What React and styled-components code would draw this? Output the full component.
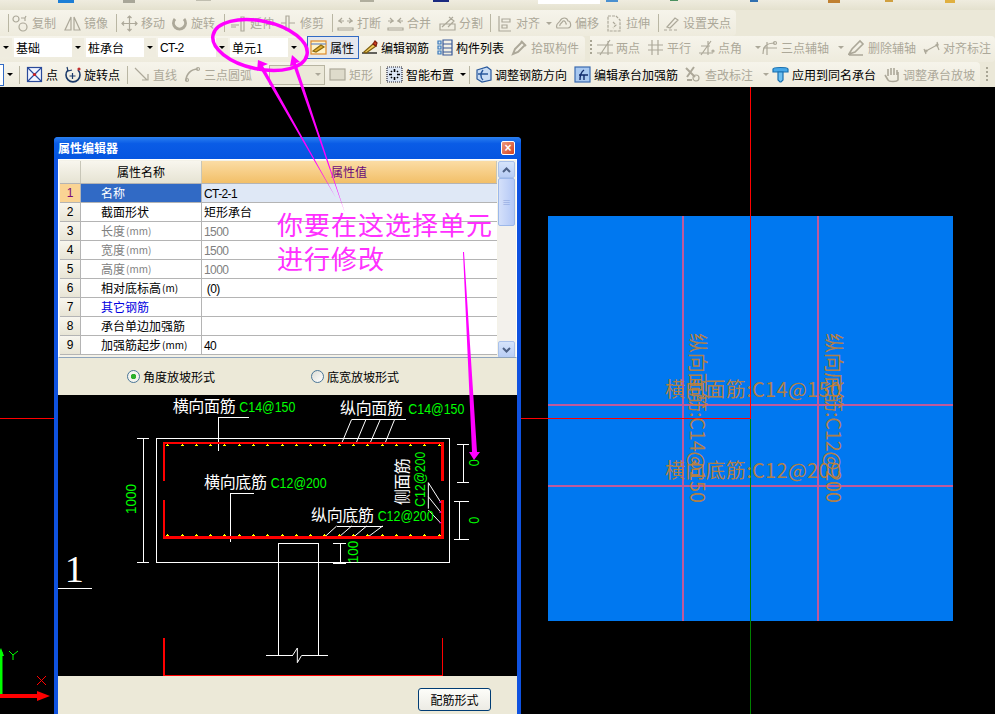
import React from 'react';
import styled, { createGlobalStyle } from 'styled-components';

const CJK = '"Noto Sans CJK SC", "Liberation Sans", sans-serif';
const LATIN = '"Liberation Sans", "Noto Sans CJK SC", sans-serif';
const GREY = '#aca899';

const GlobalStyle = createGlobalStyle`
  html, body {
    margin: 0;
    height: 100%;
    background: #000;
    overflow: hidden;
  }
  #root {
    height: 100%;
  }
`;

const Page = styled.div`
  position: relative;
  width: 995px;
  height: 714px;
  display: flex;
  flex-direction: column;
  font-family: ${CJK};
  font-size: 12px;
  line-height: 14px;
  background: #000;
  overflow: hidden;
`;

const TopStrip = styled.svg`
  display: block;
  flex: none;
  width: 995px;
  height: 10px;
  background: linear-gradient(#efecdf, #e4e1ce);
`;

const ToolRow = styled.div`
  flex: none;
  height: ${(p) => p.$h}px;
  display: flex;
  align-items: center;
  background: #ebe8d8;
`;

const Band = styled.div`
  display: flex;
  align-items: center;
  height: 100%;
  width: ${(p) => p.$w}px;
  flex: none;
  padding-left: ${(p) => p.$pad || 0}px;
  padding-bottom: ${(p) => p.$pb || 0}px;
  box-sizing: border-box;
  background: linear-gradient(#f6f4eb, #eeebdd);
  border-radius: 0 4px 4px 0;
  margin-right: ${(p) => p.$mr || 0}px;
`;

const Tool = styled.div`
  flex: none;
  width: ${(p) => p.$w}px;
  margin-left: ${(p) => p.$ml || 0}px;
  display: flex;
  align-items: center;
  gap: 3px;
  height: 22px;
  white-space: nowrap;
  color: ${(p) => (p.$off ? GREY : '#000')};
`;

const ActiveTool = styled(Tool)`
  box-sizing: border-box;
  height: 23px;
  padding-left: 2px;
  border: 1px solid #316ac5;
  background: #e4e7ee;
`;

const IconBox = styled.svg`
  flex: none;
  width: 17px;
  height: 17px;
  fill: none;
  stroke: currentColor;
  stroke-width: 1.2;
`;

const Caret = styled.span`
  flex: none;
  margin-left: ${(p) => p.$ml ?? 3}px;
  width: 0;
  height: 0;
  border-left: 3px solid transparent;
  border-right: 3px solid transparent;
  border-top: 3px solid ${(p) => (p.$off ? GREY : '#000')};
`;

const Divider = styled.div`
  flex: none;
  width: ${(p) => p.$w}px;
  height: 18px;
  box-sizing: border-box;
  border-left: 1px solid #b9b6a3;
`;

const Grip = styled.div`
  flex: none;
  width: ${(p) => p.$w}px;
  height: 16px;
  box-sizing: border-box;
  margin-left: ${(p) => p.$ml || 0}px;
  background: repeating-linear-gradient(#a8a594 0 2px, transparent 2px 4px) left / 2px 100% no-repeat;
`;

const Combo = styled.div`
  flex: none;
  width: 70px;
  height: 19px;
  margin-right: 2px;
  display: flex;
  background: #fff;
  box-sizing: border-box;
  padding-left: 2px;
  align-items: center;
  font-family: ${(p) => (p.$latin ? LATIN : CJK)};
  letter-spacing: ${(p) => (p.$latin ? '-0.6px' : '0')};
`;

const ComboText = styled.span`
  flex: 1;
`;

const ComboArrow = styled.span`
  flex: none;
  width: 12px;
  height: 19px;
  background: #efecdf;
  display: flex;
  align-items: center;
  justify-content: center;
`;

const ComboStub = styled.div`
  flex: none;
  width: ${(p) => p.$w}px;
  height: 19px;
  margin-right: ${(p) => p.$mr ?? 2}px;
  background: ${(p) => (p.$bare ? 'transparent' : '#efecdf')};
  display: flex;
  align-items: center;
  justify-content: center;
`;

const BlueEnd = styled.div`
  flex: none;
  width: 4px;
  height: 22px;
  box-sizing: border-box;
  background: #fff;
  border: 1px solid #316ac5;
  border-left: none;
  margin-right: 2px;
`;

const DeadCombo = styled.div`
  flex: none;
  width: 56px;
  height: 20px;
  box-sizing: border-box;
  border: 1px solid #b8b5a2;
  background: #ebe8d8;
  display: flex;
  align-items: center;
  justify-content: flex-end;
  padding-right: 3px;
  margin-right: 4px;
`;

const Canvas = styled.div`
  position: relative;
  flex: 1;
  background: #000;
`;

const Scene = styled.svg`
  position: absolute;
  inset: 0;
  width: 995px;
  height: 627px;
`;

const Dialog = styled.div`
  position: absolute;
  left: 54px;
  top: 50px;
  width: 467px;
  height: 590px;
  box-sizing: border-box;
  display: flex;
  flex-direction: column;
  background: #0f52e0;
  border-radius: 4px 4px 0 0;
  padding: 0 4px;
`;

const TitleBar = styled.div`
  flex: none;
  height: 22px;
  margin: 0 -4px;
  padding: 0 6px 0 4px;
  display: flex;
  align-items: center;
  justify-content: space-between;
  background: linear-gradient(#2a80f0, #0a5ce6 30%, #0555e0);
  border-radius: 4px 4px 0 0;
`;

const TitleText = styled.span`
  color: #fff;
  font-weight: 700;
  font-size: 12px;
`;

const CloseBox = styled.div`
  width: 12px;
  height: 12px;
  border: 1px solid #fff;
  border-radius: 2px;
  background: linear-gradient(135deg, #ec9a80, #d4401c);
  color: #fff;
  font: bold 12px/12px "Liberation Sans", sans-serif;
  text-align: center;
`;

const Grid = styled.div`
  flex: none;
  height: 199px;
  box-sizing: border-box;
  padding: 1px 2px 0 1px;
  display: flex;
  background: #f4f2e8;
  border: 1px solid #fff;
  border-bottom: 1px solid #8ea4bc;
  overflow: hidden;
`;

const Cells = styled.div`
  flex: none;
  width: 437px;
`;

const Row = styled.div`
  display: flex;
  height: ${(p) => (p.$head ? 23 : 19)}px;
  box-sizing: border-box;
  border-bottom: 1px solid #b4b4b4;
  background: #fff;
`;

const NumCell = styled.div`
  flex: none;
  width: 21px;
  box-sizing: border-box;
  border-right: 1px solid #b4b4b4;
  display: flex;
  align-items: center;
  justify-content: center;
  font-family: ${LATIN};
  color: ${(p) => (p.$on ? '#7a0a7a' : '#000')};
  background: ${(p) => (p.$on ? '#fad494' : 'linear-gradient(#f8f6ee, #e8e5d6)')};
`;

const NameCell = styled.div`
  flex: none;
  width: 121px;
  box-sizing: border-box;
  padding-left: 20px;
  border-right: 1px solid #b4b4b4;
  display: flex;
  align-items: center;
  white-space: pre;
  color: ${(p) => (p.$on ? '#fff' : p.$tone || '#000')};
  background: ${(p) => (p.$on ? '#316ac5' : '#fff')};
`;

const Unit = styled.span`
  font-size: 10px;
  padding-left: 1px;
`;

const ValueCell = styled.div`
  flex: 1;
  box-sizing: border-box;
  padding-left: 2px;
  padding-top: ${(p) => (p.$latin ? 1 : 0)}px;
  display: flex;
  align-items: center;
  font-family: ${(p) => (p.$latin ? LATIN : CJK)};
  letter-spacing: ${(p) => (p.$latin ? '-0.6px' : '0')};
  color: ${(p) => p.$tone || '#000'};
  background: ${(p) => (p.$on ? '#dfe8f6' : '#fff')};
`;

const HeadCell = styled.div`
  flex: ${(p) => (p.$w ? 'none' : 1)};
  width: ${(p) => p.$w || 0}px;
  box-sizing: border-box;
  border-right: 1px solid #c8c6b8;
  display: flex;
  align-items: center;
  justify-content: center;
  background: ${(p) => (p.$hot ? 'linear-gradient(#fbdca4, #f2bf68)' : 'linear-gradient(#f8f6ee, #e6e3d3)')};
  color: ${(p) => (p.$hot ? '#6a0a7a' : '#000')};
`;

const ScrollTrack = styled.div`
  flex: none;
  width: 17px;
  margin-left: 1px;
  height: 197px;
  display: flex;
  flex-direction: column;
  align-items: stretch;
  background: #f3f1ec;
`;

const ScrollBtn = styled.div`
  flex: none;
  height: 17px;
  box-sizing: border-box;
  border: 1px solid #a9c1ea;
  border-radius: 2px;
  background: linear-gradient(#d6e4fb, #b8cdf4);
  display: flex;
  align-items: center;
  justify-content: center;
`;

const Chevron = styled.svg`
  width: 9px;
  height: 6px;
  fill: none;
  stroke: #4d6185;
  stroke-width: 2;
`;

const ScrollThumb = styled.div`
  flex: none;
  height: 48px;
  box-sizing: border-box;
  border: 1px solid #9cb8ea;
  border-radius: 2px;
  background: linear-gradient(90deg, #d4e0fa, #b4c8f6);
  display: flex;
  align-items: center;
  justify-content: center;
  color: #8aa4dc;
  font-size: 9px;
  line-height: 3px;
`;

const ScrollGap = styled.div`
  flex: 1;
`;

const RadioBar = styled.div`
  flex: none;
  height: 37px;
  display: flex;
  align-items: center;
  background: #ece9d8;
  padding-left: 69px;
  gap: 96px;
`;

const RadioItem = styled.label`
  display: flex;
  align-items: center;
  gap: 3px;
`;

const RadioDot = styled.span`
  width: 11px;
  height: 11px;
  border: 1px solid #4a7698;
  border-radius: 50%;
  background: ${(p) => (p.$on ? 'radial-gradient(#2cb02c 0 2.5px, #f4f4ee 3px)' : 'linear-gradient(135deg, #dcdcd4, #fff)')};
`;

const DrawingPane = styled.svg`
  display: block;
  flex: none;
  width: 459px;
  height: 281px;
  background: #000;
  overflow: visible;
`;

const Footer = styled.div`
  flex: 1;
  display: flex;
  justify-content: flex-end;
  align-items: flex-start;
  padding: 12px 26px 0 0;
  background: #ece9d8;
`;

const PushButton = styled.div`
  width: 73px;
  height: 23px;
  box-sizing: border-box;
  border: 1px solid #003c74;
  border-radius: 3px;
  background: linear-gradient(#fdfdf9, #ecebe4);
  display: flex;
  align-items: center;
  justify-content: center;
`;

const Markup = styled.svg`
  position: absolute;
  left: 0;
  top: 0;
  width: 995px;
  height: 714px;
  pointer-events: none;
`;

const g = {
  copy: <><circle cx="4" cy="4" r="3" /><circle cx="11" cy="12" r="4" /><path d="M9 3l4 0 1-2M13 3v3" /></>,
  mirror: <><path d="M7 2L1 15h6zM10 2l6 13h-6z" /></>,
  move: <><path d="M8.5 1v15M1 8.5h15M6.5 3l2-2 2 2M6.5 14l2 2 2-2M3 6.5l-2 2 2 2M14 6.5l2 2-2 2" /></>,
  rotate: <><path d="M4 4a6 6 0 1 0 9 0" strokeWidth="3" /></>,
  extend: <><path d="M1 10h8M1 12h5M11 2h3v14h-3z" /></>,
  trim: <><path d="M6 1h3v14H6zM9 8h6M1 8h5" /></>,
  cut: <><path d="M1 6h6M10 6h6M1 13h15v2H1zM5 3L2 6l3 2M12 3l3 3-3 2" /></>,
  merge: <><path d="M1 6h6M10 6h6M1 13h15v2H1zM3 3l3 3-3 2M14 3l-3 3 3 2" /></>,
  split: <><path d="M1 9h15v6H1zM3 12L14 2M10 2l5 4-6 6" /></>,
  align: <><path d="M3 1v15h12M6 4h8v3H6zM6 10h5v3H6z" /></>,
  offset: <><path d="M2 13c-2-4 2-5 3-7 2-4 7-4 8 0 3 0 4 7 0 7zM5 11c-1-2 2-3 3-5 2-1 3 2 3 3h1" /></>,
  stretch: <><path d="M2 1h8l4 4v11H2zM7 7l3 3-3 3" strokeDasharray="3 1" /></>,
  anchor: <><path d="M1 15h3M6 15h3M11 15h3M4 12L12 3l3 2-8 8z" /></>,
  picker: <><path d="M2 15l2-5 7-7 3 3-7 7zM10 2l5 5" strokeWidth="2" /></>,
  two: <><path d="M1 14h16M1 6h16M4 16L14 1M12 2v14" /></>,
  para: <><path d="M1 6h15M1 11h15M5 1v15M11 1v15" /></>,
  angle: <><path d="M1 14h14M3 7h9M3 16L13 2M10 2v14" /><circle cx="15" cy="12" r="1" /></>,
  arc3: <><path d="M2 15c0-8 4-11 12-11M6 16V3M2 9h14" /><circle cx="14" cy="4" r="1.5" /></>,
  drop: <><path d="M1 15l3-5 8-8 3 3-8 8zM1 16h14" strokeWidth="1.6" /></>,
  dim: <><path d="M1 10l2 5M3 12l11-6 2 5M14 3l1 3" /><circle cx="3" cy="12" r="1" /><circle cx="14" cy="6" r="1" /></>,
  line: <><path d="M2 2l12 12M9 14h6V8" /></>,
  arc: <><path d="M2 15c0-7 5-12 12-12" strokeWidth="1.6" /><circle cx="3" cy="14" r="1.5" /><circle cx="14" cy="3" r="1.5" /></>,
  box: <><rect x="1" y="3" width="15" height="11" fill="#dedbcb" /></>,
  query: <><path d="M1 2l9 9M9 1L2 11M2 14h5" strokeWidth="2" /><circle cx="11" cy="12" r="3" /></>,
  hand: <><path d="M2 9l3 5c1 2 9 2 10 0V6M5 10V3M8 9V2M11 9V2M14 9V4" strokeWidth="1.6" /></>,
  prop: (
    <>
      <rect x="1" y="2" width="15" height="13" fill="#fff2c8" stroke="#e08a28" />
      <path d="M1 5h15" stroke="#6a88c8" />
      <path d="M3 12l8-6 3 2-8 5z" fill="#e8b030" stroke="#8a6a10" />
    </>
  ),
  rebar: (
    <>
      <path d="M1 14h15" stroke="#000" />
      <path d="M3 13l9-8 3 2-10 7z" fill="#f4d060" stroke="#806010" />
      <path d="M12 5l2-3 2 2-1 3z" fill="#d04020" stroke="#802010" />
    </>
  ),
  list: (
    <>
      <path d="M7 1h9v15H7zM7 5h9M7 9h9M7 13h9" stroke="#3a5a98" />
      <path d="M2 2h3v3H2zM2 7h3v3H2zM2 12h3v3H2z" stroke="#3a78b8" fill="#d8e8f8" />
    </>
  ),
  point: (
    <>
      <rect x="1.5" y="1.5" width="14" height="14" stroke="#2a4a9a" fill="#f0f4ff" />
      <path d="M2 2l13 13M15 2L2 15" stroke="#2a4a9a" />
      <circle cx="8.5" cy="8.5" r="1.6" fill="#d02020" stroke="none" />
    </>
  ),
  spin: (
    <>
      <path d="M4 4a7 7 0 1 0 10 0" stroke="#1a3a6a" strokeWidth="1.6" />
      <path d="M3 1l1 4 4-1" stroke="#1a3a6a" />
      <path d="M8.5 7v6M5.5 10h6" stroke="#1a3a6a" />
      <circle cx="15" cy="3" r="1.6" fill="#c03030" stroke="none" />
    </>
  ),
  smart: (
    <>
      <rect x="1" y="1" width="15" height="15" fill="#dce6f4" stroke="#223" strokeDasharray="1 1" />
      <path d="M8.5 3v3M8.5 11v3M3 8.5h3M11 8.5h3M5 5l1 1M12 5l-1 1M5 12l1-1M12 12l-1-1" stroke="#000" strokeWidth="1.6" />
    </>
  ),
  tune: (
    <>
      <path d="M2 4l10-3 4 3v10l-9 2-5-3z" fill="#c8dcf4" stroke="#28589c" />
      <path d="M3 8h10M8 4c-3 4-3 7 0 10" stroke="#28589c" strokeWidth="1.4" />
    </>
  ),
  haunch: (
    <>
      <rect x="1" y="1" width="15" height="15" fill="#a8c8f0" stroke="#3a6ab0" />
      <path d="M5 9h9M10 4c-3 2-4 5-4 10M10 9v5" stroke="#102a6a" strokeWidth="1.4" />
    </>
  ),
  apply: (
    <>
      <path d="M1 3c0-2 15-2 15 0v3H1z" fill="#48a8e8" stroke="#1a70b0" />
      <path d="M6 6h5v8l-2 2h-1l-2-2z" fill="#70c0f0" stroke="#1a70b0" />
    </>
  ),
};

const Icon = ({ name }) => (
  <IconBox viewBox="0 0 17 17">
    {g[name]}
  </IconBox>
);

const T = ({ icon, label, w, off, caret, ml, left }) => (
  <Tool $w={w} $off={off} $ml={left}>
    <Icon name={icon} />
    {label}
    {caret && <Caret $off={off} $ml={ml} />}
  </Tool>
);

const propRows = [
  { name: '名称', value: 'CT-2-1', latin: true, on: true },
  { name: '截面形状', value: '矩形承台' },
  { name: '长度', unit: '(mm)', value: '1500', latin: true, tone: '#808080' },
  { name: '宽度', unit: '(mm)', value: '1500', latin: true, tone: '#808080' },
  { name: '高度', unit: '(mm)', value: '1000', latin: true, tone: '#808080' },
  { name: '相对底标高', unit: '(m)', value: '\u00a0(0)', latin: true },
  { name: '其它钢筋', value: '', nameTone: '#0000e0' },
  { name: '承台单边加强筋', value: '' },
  { name: '加强筋起步', unit: '(mm)', value: '40', latin: true },
];

const dotXs = [352, 397, 439, 481, 523, 568, 610, 652, 697, 739, 781, 823, 869, 911, 953, 998, 1039, 1081, 1123, 1168];
const plus = (x, y) => `M${x - 4} ${y}h8M${x} ${y - 4}v8`;

const Code = ({ children, len, ...rest }) => (
  <text fontSize="45" fill="#0f0" fontFamily={LATIN} textLength={len} lengthAdjust="spacingAndGlyphs" {...rest}>
    {children}
  </text>
);

const Label = ({ x, y, cn, code, codeX }) => (
  <>
    <text x={x} y={y} fontSize="48" fill="#fff" fontFamily={CJK} textLength="189">{cn}</text>
    <Code x={codeX} y={y} len="168">{code}</Code>
  </>
);

const Drawing = () => (
  <DrawingPane viewBox="24 15 1377 843">
    <g fill="none" stroke="#fff" strokeWidth="3" shapeRendering="crispEdges">
      <rect x="319" y="145" width="880" height="372" />
      <path d="M505 82h92M505 82v100M541 310h71M541 310v145M905 88h163M860 408h138" />
      <path d="M262 145h36M262 517h36M279 145v372" />
      <path d="M1222 162h36M1222 278h36M1240 162v116M1212 334h46M1212 449h46M1229 334v115" />
      <path d="M850 460h38M850 520h38M870 460v60" />
      <path d="M685 460h120M685 460v336M805 460v336M648 796h80M755 796h78M24 595h102" />
    </g>
    <g fill="none" stroke="#fff" strokeWidth="3">
      <path d="M728 796l14-22v44l13-22" />
      <path d="M905 88l-30 72M948 88l-30 72M991 88l-31 72M1034 88l-29 72" />
      <path d="M860 408l-35 32M905 408l-37 32M950 408l-38 32M998 408l-43 32" />
      <path d="M1135 278v78M1135 278l36 57M1135 320l36 45M1135 360l36 38" />
    </g>
    <path d="M342 272V158H1177V272M342 330V442H1177V330" fill="none" stroke="#f00" strokeWidth="7" shapeRendering="crispEdges" />
    <path d="M342 745V856H1177V745" fill="none" stroke="#f00" strokeWidth="5" shapeRendering="crispEdges" />
    <path
      d={dotXs.map((x) => plus(x, 165) + plus(x, 435)).join('')}
      stroke="#ff0"
      strokeWidth="3"
      shapeRendering="crispEdges"
    />
    <path d="M1171 335v3M1171 365v3M1171 397v3" stroke="#f0f" strokeWidth="6" />
    <Label x={368} y={66} cn="横向面筋" code="C14@150" codeX={568} />
    <Label x={870} y={72} cn="纵向面筋" code="C14@150" codeX={1075} />
    <Label x={462} y={294} cn="横向底筋" code="C12@200" codeX={662} />
    <Label x={783} y={394} cn="纵向底筋" code="C12@200" codeX={983} />
    <text transform="translate(1074 345) rotate(-90)" fontSize="48" fill="#fff" fontFamily={CJK} textLength="140">侧面筋</text>
    <Code transform="translate(1125 350) rotate(-90)" len="165">C12@200</Code>
    <Code transform="translate(258 372) rotate(-90)" len="90">1000</Code>
    <Code transform="translate(925 520) rotate(-90)" len="68">100</Code>
    <Code transform="translate(1287 229) rotate(-90)" len="21">0</Code>
    <Code transform="translate(1287 401) rotate(-90)" len="21">0</Code>
    <text x="44" y="577" fontSize="115" fill="#fff" fontFamily='"Liberation Serif", serif'>1</text>
  </DrawingPane>
);

const App = () => (
  <Page>
    <GlobalStyle />
    <TopStrip viewBox="0 0 995 10">
      <rect x="58" y="0" width="16" height="3" fill="#1c7ed6" />
      <rect x="123" y="0" width="12" height="3" fill="#a8a698" />
      <rect x="196" y="0" width="15" height="1" fill="#c0beb0" />
      <rect x="360" y="0" width="14" height="2" fill="#b0ae9e" />
      <rect x="433" y="0" width="16" height="2" fill="#1a2a80" />
      <rect x="538" y="0" width="62" height="4" fill="#fff" />
      <rect x="606" y="0" width="12" height="2" fill="#4a90d0" />
      <rect x="670" y="0" width="8" height="1" fill="#4a9060" />
      <rect x="750" y="0" width="8" height="2" fill="#3070b0" />
      <rect x="828" y="0" width="12" height="3" fill="#c08030" />
      <rect x="885" y="0" width="8" height="2" fill="#d0a040" />
      <rect x="945" y="0" width="10" height="3" fill="#e0b040" />
    </TopStrip>

    <ToolRow $h={26}>
      <Band $w={736} $pad={8}>
        <Divider $w={4} />
        <T icon="copy" label="复制" w={52} off />
        <T icon="mirror" label="镜像" w={52} off />
        <Divider $w={5} />
        <T icon="move" label="移动" w={50} off />
        <T icon="rotate" label="旋转" w={53} off />
        <Divider $w={6} />
        <T icon="extend" label="延伸" w={50} off />
        <T icon="trim" label="修剪" w={52} off />
        <Divider $w={5} />
        <T icon="cut" label="打断" w={50} off />
        <T icon="merge" label="合并" w={52} off />
        <T icon="split" label="分割" w={51} off />
        <Divider $w={6} />
        <T icon="align" label="对齐" caret w={59} off />
        <T icon="offset" label="偏移" w={51} off />
        <T icon="stretch" label="拉伸" w={52} off />
        <Divider $w={5} />
        <T icon="anchor" label="设置夹点" w={70} off />
      </Band>
    </ToolRow>

    <ToolRow $h={26}>
      <Band $w={585} $mr={5} $pb={3}>
        <ComboStub $w={12}><Caret $ml={0} /></ComboStub>
        <Combo><ComboText>基础</ComboText><ComboArrow><Caret $ml={0} /></ComboArrow></Combo>
        <Combo><ComboText>桩承台</ComboText><ComboArrow><Caret $ml={0} /></ComboArrow></Combo>
        <Combo $latin><ComboText>CT-2</ComboText><ComboArrow><Caret $ml={0} /></ComboArrow></Combo>
        <Combo><ComboText>单元1</ComboText><ComboArrow><Caret $ml={0} /></ComboArrow></Combo>
        <ActiveTool $w={52} $ml={5}>
          <Icon name="prop" />
          属性
        </ActiveTool>
        <T icon="rebar" label="编辑钢筋" w={75} left={2} />
        <T icon="list" label="构件列表" w={75} />
        <T icon="picker" label="拾取构件" w={70} off />
      </Band>
      <Band $w={405} $pb={3}>
        <Grip $w={6} />
        <T icon="two" label="两点" w={51} off />
        <T icon="para" label="平行" w={51} off />
        <T icon="angle" label="点角" caret ml={10} w={63} off />
        <T icon="arc3" label="三点辅轴" caret ml={6} w={87} off />
        <T icon="drop" label="删除辅轴" w={75} off />
        <T icon="dim" label="对齐标注" w={68} off />
      </Band>
    </ToolRow>

    <ToolRow $h={25}>
      <Band $w={980}>
        <BlueEnd />
        <ComboStub $w={7} $mr={6} $bare><Caret $ml={0} /></ComboStub>
        <Divider $w={7} />
        <T icon="point" label="点" w={38} />
        <T icon="spin" label="旋转点" w={63} />
        <Divider $w={6} />
        <T icon="line" label="直线" w={51} off />
        <T icon="arc" label="三点圆弧" w={85} off />
        <DeadCombo><Caret $ml={0} $off /></DeadCombo>
        <T icon="box" label="矩形" w={51} off />
        <Divider $w={6} />
        <T icon="smart" label="智能布置" caret w={83} />
        <Divider $w={6} />
        <T icon="tune" label="调整钢筋方向" w={99} />
        <T icon="haunch" label="编辑承台加强筋" w={111} />
        <T icon="query" label="查改标注" caret ml={7} w={87} off />
        <T icon="apply" label="应用到同名承台" w={111} />
        <T icon="hand" label="调整承台放坡" w={97} off />
      </Band>
      <Grip $w={4} $ml={6} />
    </ToolRow>

    <Canvas>
      <Scene viewBox="0 87 995 627">
        <rect x="548" y="216" width="405" height="405" fill="#0078f0" />
        <path d="M683 216v405M818 216v405M548 405h405M548 486h405" stroke="#c05a9c" strokeWidth="2" />
        <path d="M0 418.5h751M750.5 418V87" fill="none" stroke="#f00" strokeWidth="1" />
        <path d="M750.5 419v295" fill="none" stroke="#008000" strokeWidth="1" />
        <g fill="#c88030" fillOpacity="0.9">
          <text x="665" y="397" fontSize="20" fontFamily={CJK} textLength="176">横向面筋:C14@150</text>
          <text x="665" y="478" fontSize="20" fontFamily={CJK} textLength="176">横向底筋:C12@200</text>
          <text transform="translate(690 333) rotate(90)" fontSize="20" fontFamily={CJK} textLength="170">纵向面筋:C14@150</text>
          <text transform="translate(826 333) rotate(90)" fontSize="20" fontFamily={CJK} textLength="170">纵向底筋:C12@200</text>
        </g>
        <path d="M1 696V652" stroke="#0f0" strokeWidth="3" />
        <path d="M-3 656l4-8 3 8z" fill="#0f0" />
        <path d="M0 696h38" stroke="#f00" strokeWidth="4" />
        <path d="M37 691l13 5-13 5z" fill="#f00" />
        <path d="M9 651l4 4 5-4M13 655v5" fill="none" stroke="#0f0" />
        <path d="M37 676l9 9M46 676l-9 9" stroke="#f00" />
      </Scene>

      <Dialog>
        <TitleBar>
          <TitleText>属性编辑器</TitleText>
          <CloseBox>×</CloseBox>
        </TitleBar>
        <Grid>
          <Cells>
            <Row $head>
              <HeadCell $w={21} />
              <HeadCell $w={121}>属性名称</HeadCell>
              <HeadCell $hot>属性值</HeadCell>
            </Row>
            {propRows.map((r, i) => (
              <Row key={r.name}>
                <NumCell $on={r.on}>{i + 1}</NumCell>
                <NameCell $on={r.on} $tone={r.nameTone || r.tone}>
                  {r.name}
                  {r.unit && <Unit>{r.unit}</Unit>}
                </NameCell>
                <ValueCell $on={r.on} $latin={r.latin} $tone={r.tone}>{r.value}</ValueCell>
              </Row>
            ))}
          </Cells>
          <ScrollTrack>
            <ScrollBtn><Chevron viewBox="0 0 9 6"><path d="M1 5l3.5-3.5L8 5" /></Chevron></ScrollBtn>
            <ScrollThumb>≡</ScrollThumb>
            <ScrollGap />
            <ScrollBtn><Chevron viewBox="0 0 9 6"><path d="M1 1l3.5 3.5L8 1" /></Chevron></ScrollBtn>
          </ScrollTrack>
        </Grid>
        <RadioBar>
          <RadioItem><RadioDot $on />角度放坡形式</RadioItem>
          <RadioItem><RadioDot />底宽放坡形式</RadioItem>
        </RadioBar>
        <Drawing />
        <Footer>
          <PushButton>配筋形式</PushButton>
        </Footer>
      </Dialog>
    </Canvas>

    <Markup viewBox="0 0 995 714">
      <ellipse cx="260" cy="45" rx="48" ry="24" fill="none" stroke="#f0f" strokeWidth="3.5" transform="rotate(12 260 45)" />
      <path d="M258 60l10 4-5 2 73 132-76-130-3 3z" fill="#f0f" />
      <path d="M292 55l8 7-4 1 49 150-52-148-3 1z" fill="#f0f" />
      <path d="M463 252h1l13 200h3l-6 8-5-8h3z" fill="#f0f" />
      <g fill="#ff30ff" fontFamily={CJK} fontSize="26">
        <text x="277" y="235" textLength="215">你要在这选择单元</text>
        <text x="277" y="269" textLength="107">进行修改</text>
      </g>
    </Markup>
  </Page>
);

export default App;
